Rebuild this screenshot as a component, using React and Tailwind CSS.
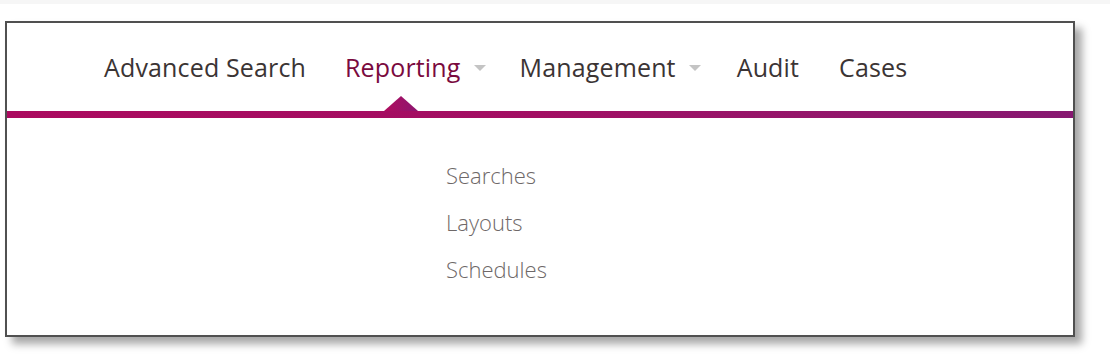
const navItems = [
  { label: 'Advanced Search', ml: '' },
  { label: 'Reporting', active: true, caret: true, ml: 'ml-[39px]' },
  { label: 'Management', caret: true, ml: 'ml-[34px]' },
  { label: 'Audit', ml: 'ml-[36px]' },
  { label: 'Cases', ml: 'ml-[40px]' },
];

const subItems = ['Searches', 'Layouts', 'Schedules'];

const Caret = () => (
  <svg width="12" height="6" viewBox="0 0 12 6" className="ml-[13px] mt-[2px]">
    <path d="M0 0 L12 0 L6 6 Z" fill="#c4c4c4" />
  </svg>
);

export default function App() {
  return (
    <div className="w-[1110px] h-[358px] bg-white relative overflow-hidden" style={{ fontFamily: '"Open Sans", "Noto Sans", sans-serif' }}>
      <div className="h-[4px] bg-[#f6f6f6]"></div>
      <div className="pl-[5px] pt-[17px]">
        <div className="w-[1070px] h-[316px] bg-white border-2 border-[#505050] shadow-[7px_7px_8px_rgba(0,0,0,0.35)]">
          <div className="h-[88px] flex items-center pl-[97px] relative">
            {navItems.map((item) => (
              <div key={item.label} className={`flex items-center ${item.ml}`}>
                <span
                  className={`text-[25px] leading-none tracking-[0.15px] ${item.active ? 'text-[#7a0a3e]' : 'text-[#3b3434]'}`}
                >
                  {item.label}
                </span>
                {item.caret && <Caret />}
              </div>
            ))}
            <svg width="34" height="16" viewBox="0 0 34 16" className="absolute left-[377px] bottom-0">
              <defs>
                <linearGradient id="tri" x1="0" x2="1" y1="0" y2="0">
                  <stop offset="0" stopColor="#b00c5e" />
                  <stop offset="1" stopColor="#8c1670" />
                </linearGradient>
              </defs>
              <path d="M0 16 L17 1 L34 16 Z" fill="url(#tri)" />
            </svg>
          </div>
          <div className="h-[7px] bg-gradient-to-r from-[#ab0a5f] via-[#a20e63] to-[#871871]"></div>
          <div className="pl-[439px] pt-[47px] flex flex-col gap-[26px]">
            {subItems.map((s) => (
              <div key={s} className="text-[22px] leading-[21px] text-[#6e6868] font-light">
                {s}
              </div>
            ))}
          </div>
        </div>
      </div>
    </div>
  );
}
